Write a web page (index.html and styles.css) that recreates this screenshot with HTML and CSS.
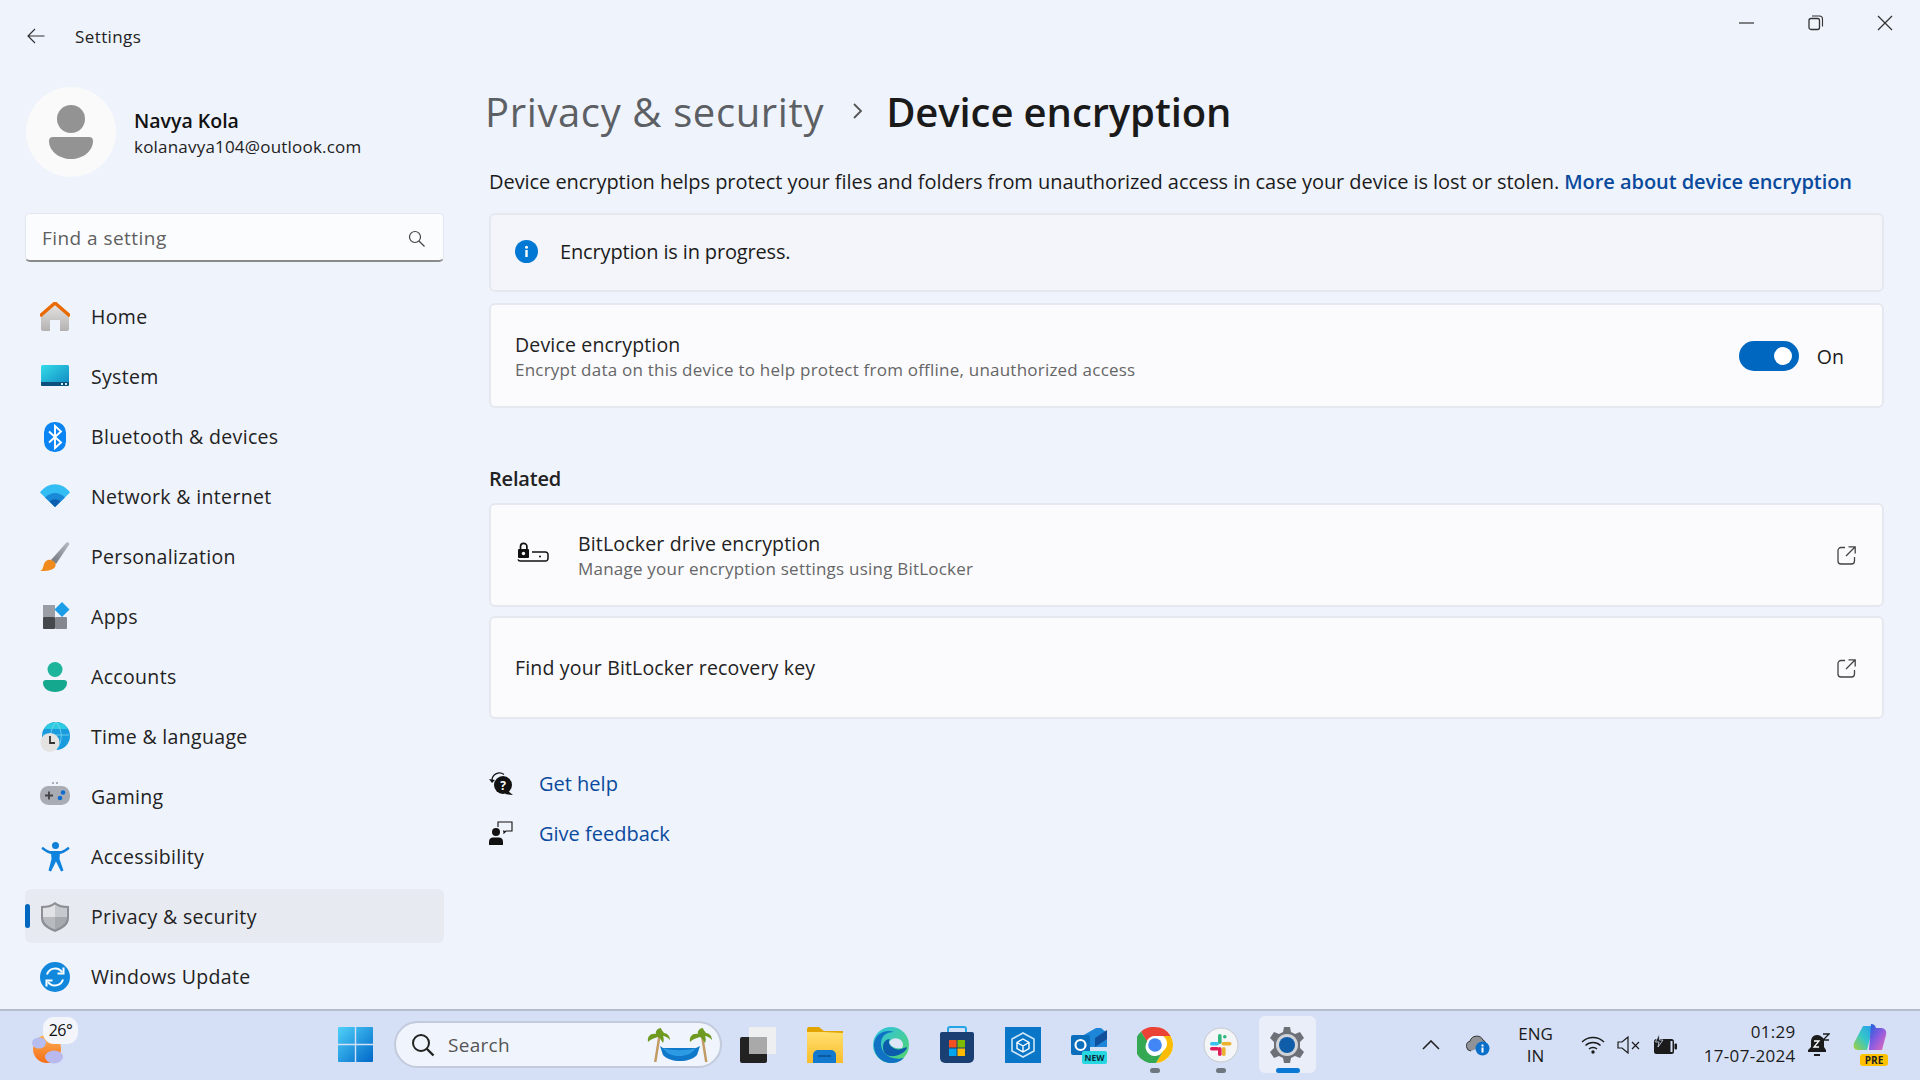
FILE: index.html
```html
<!DOCTYPE html>
<html lang="en">
<head>
    <meta charset="UTF-8">
    <title>Settings</title>
    <link rel="stylesheet" href="styles.css">
</head>
<body>
    <div class="window">
        <div class="titlebar">
            <div class="title-left">
                <svg class="back" width="20" height="20" viewBox="0 0 20 20"><path d="M18.5 10H2M9 3l-7 7 7 7" fill="none" stroke="#333" stroke-width="1.2"/></svg>
                <span>Settings</span>
            </div>
            <div class="controls">
                <svg width="16" height="16" viewBox="0 0 16 16"><path d="M0 8h15" stroke="#333" stroke-width="1.2"/></svg>
                <svg width="16" height="16" viewBox="0 0 16 16"><rect x="1" y="3.5" width="10.5" height="11" rx="2" fill="none" stroke="#333" stroke-width="1.3"/><path d="M4 1h7.5a3 3 0 0 1 3 3v7.5" fill="none" stroke="#333" stroke-width="1.1"/></svg>
                <svg width="16" height="16" viewBox="0 0 16 16"><path d="M1 1l14 14M15 1L1 15" stroke="#333" stroke-width="1.3"/></svg>
            </div>
        </div>
        <div class="content">
            <aside class="sidebar">
                <div class="profile">
                    <div class="avatar">
                        <svg width="44" height="54" viewBox="0 0 44 54"><circle cx="22" cy="14" r="14" fill="#939393"/><path d="M0 36a4 4 0 0 1 4-4h36a4 4 0 0 1 4 4c0 10-10 18-22 18S0 46 0 36z" fill="#939393"/></svg>
                    </div>
                    <div class="profile-text">
                        <div class="profile-name">Navya Kola</div>
                        <div class="profile-mail">kolanavya104@outlook.com</div>
                    </div>
                </div>
                <div class="search">
                    <span>Find a setting</span>
                    <svg width="17" height="17" viewBox="0 0 17 17"><circle cx="7" cy="7" r="5.5" fill="none" stroke="#444" stroke-width="1.2"/><path d="M11 11l5.5 5.5" stroke="#444" stroke-width="1.2"/></svg>
                </div>
                <nav class="nav">
                    <a class="nav-item">
                        <svg class="nav-icon" viewBox="0 0 30 30">
                            <defs><linearGradient id="hw" x1="0" y1="0" x2="0" y2="1"><stop offset="0" stop-color="#e6e4e2"/><stop offset="1" stop-color="#b4b2b0"/></linearGradient></defs>
                            <path d="M1 12L15 2l14 10v15a2 2 0 0 1-2 2h-7V18h-10v11H3a2 2 0 0 1-2-2z" fill="url(#hw)"/>
                            <path d="M0 14L15 1l15 13" fill="none" stroke="#e86a00" stroke-width="3.4"/>
                        </svg>
                        <span>Home</span>
                    </a>
                    <a class="nav-item">
                        <svg class="nav-icon" viewBox="0 0 30 30">
                            <defs><linearGradient id="sy" x1="0" y1="0" x2="1" y2="1"><stop offset="0" stop-color="#34dce8"/><stop offset="1" stop-color="#0f86c0"/></linearGradient></defs>
                            <rect x="1" y="3" width="28" height="21" rx="1.5" fill="url(#sy)"/>
                            <path d="M1 20h28v2.5a1.5 1.5 0 0 1-1.5 1.5h-25A1.5 1.5 0 0 1 1 22.5z" fill="#0b4f7c"/>
                            <path d="M21 21h2v2h-2zM25 21h2v2h-2z" fill="#cfeaf5"/>
                        </svg>
                        <span>System</span>
                    </a>
                    <a class="nav-item">
                        <svg class="nav-icon" viewBox="0 0 30 30">
                            <rect x="4" y="0" width="22" height="30" rx="10.5" fill="#0a84f2"/>
                            <path d="M9 9.5l12 11-6 5.5V4l6 5.5-12 11" fill="none" stroke="#fff" stroke-width="1.9"/>
                        </svg>
                        <span>Bluetooth &amp; devices</span>
                    </a>
                    <a class="nav-item">
                        <svg class="nav-icon" viewBox="0 0 30 30">
                            <path d="M0 10.5C8-.5 22-.5 30 10.5L15 25z" fill="#33bdf2"/>
                            <path d="M5 15.5c6-6 14-6 20 0l-10 9.5z" fill="#1a8ad8"/>
                            <path d="M9.5 19.5c3.5-3 7.500-3 11 0L15 25z" fill="#0c5fae"/>
                        </svg>
                        <span>Network &amp; internet</span>
                    </a>
                    <a class="nav-item">
                        <svg class="nav-icon" viewBox="0 0 30 30">
                            <defs><linearGradient id="br" x1="0" y1="1" x2="1" y2="0"><stop offset="0" stop-color="#6d737a"/><stop offset="1" stop-color="#b9bdc3"/></linearGradient></defs>
                            <path d="M11 18L26.5.5c1.5-.8 3 .3 2.7 2L16 22z" fill="url(#br)"/>
                            <path d="M0 29c3-1 3-4 4-7s4-5 7-4 6 4 4 7-8 4.5-15 4z" fill="#f08a1d"/>
                        </svg>
                        <span>Personalization</span>
                    </a>
                    <a class="nav-item">
                        <svg class="nav-icon" viewBox="0 0 30 30">
                            <rect x="3" y="3" width="12" height="12" fill="#9a9ea4"/>
                            <rect x="3" y="15" width="12" height="12" rx="1" fill="#45484d"/>
                            <rect x="15" y="15" width="12" height="12" rx="1" fill="#84888e"/>
                            <path d="M22 0l7.5 7.5-7.5 7.5-7.5-7.5z" fill="#1b9de8"/>
                        </svg>
                        <span>Apps</span>
                    </a>
                    <a class="nav-item">
                        <svg class="nav-icon" viewBox="0 0 30 30">
                            <circle cx="15" cy="7.5" r="7.5" fill="#1cb59c"/>
                            <path d="M3 21a3 3 0 0 1 3-3h18a3 3 0 0 1 3 3c0 5-5 9-12 9S3 26 3 21z" fill="#14a88f"/>
                        </svg>
                        <span>Accounts</span>
                    </a>
                    <a class="nav-item">
                        <svg class="nav-icon" viewBox="0 0 30 30">
                            <circle cx="16" cy="14" r="14" fill="#1a9bde"/>
                            <path d="M16 0a14 14 0 0 0-12 7h24a14 14 0 0 0-12-7z" fill="#2ecbe0"/>
                            <path d="M3 13h26M16 0c-7 8-7 20 0 28M16 0c7 8 7 20 0 28" fill="none" stroke="#7ed5ee" stroke-width=".8"/>
                            <circle cx="10" cy="20.5" r="9.5" fill="#e4e3e1"/>
                            <path d="M10 14v7h5" fill="none" stroke="#333" stroke-width="1.8"/>
                        </svg>
                        <span>Time &amp; language</span>
                    </a>
                    <a class="nav-item">
                        <svg class="nav-icon" viewBox="0 0 30 30">
                            <rect x="0" y="4" width="30" height="19" rx="8.5" fill="#a9acb2"/>
                            <path d="M5 13.5h8M9 9.5v8" stroke="#444" stroke-width="1.8"/>
                            <circle cx="23" cy="10.5" r="2.3" fill="#0f6cd0"/><circle cx="20" cy="16" r="2.3" fill="#0f6cd0"/>
                            <path d="M12 1h2M16 1h2" stroke="#666" stroke-width="1"/>
                        </svg>
                        <span>Gaming</span>
                    </a>
                    <a class="nav-item">
                        <svg class="nav-icon" viewBox="0 0 30 30">
                            <circle cx="15.5" cy="3.5" r="3.5" fill="#0f7fd8"/>
                            <path d="M3 6.5c4 3 7 4 8 4h9c1 0 4-1 8-4" fill="none" stroke="#0f7fd8" stroke-width="2.8" stroke-linecap="round"/>
                            <path d="M11 10h9l-.5 7 4 11.5-2.5 1-5-10-5 10-2.5-1 3-11.5z" fill="#0f84df"/>
                        </svg>
                        <span>Accessibility</span>
                    </a>
                    <a class="nav-item is-active">
                        <svg class="nav-icon" viewBox="0 0 30 30">
                            <path d="M15 0c4 3 8 4 14 4v12c0 7-6 11-14 14C7 27 1 23 1 16V4c6 0 10-1 14-4z" fill="#8c9095"/>
                            <path d="M15 2.5c3 2.5 7 3.5 12 3.5V15H15z" fill="#c6c9cd"/>
                            <path d="M15 2.5C12 5 8 6 3 6V15H15z" fill="#e0e2e5"/>
                            <path d="M3 15H15v12.5c-6-2.5-12-6-12-12.5z" fill="#b8bbbf"/>
                            <path d="M27 15H15v12.5c6-2.5 12-6 12-12.5z" fill="#a6a9ae"/>
                        </svg>
                        <span>Privacy &amp; security</span>
                    </a>
                    <a class="nav-item">
                        <svg class="nav-icon" viewBox="0 0 30 30">
                            <circle cx="15" cy="15" r="15" fill="#1288dc"/>
                            <path d="M7 12.5a8.5 8.5 0 0 1 15-2.5M23 17.5a8.5 8.5 0 0 1-15 2.5" fill="none" stroke="#fff" stroke-width="2"/>
                            <path d="M23.5 5.5v6h-6M6.5 24.5v-6h6" fill="none" stroke="#fff" stroke-width="2"/>
                        </svg>
                        <span>Windows Update</span>
                    </a>
                </nav>
            </aside>
            <main class="main">
                <div class="crumbs">
                    <span class="crumb-parent">Privacy &amp; security</span>
                    <svg class="crumb-sep" width="12" height="18" viewBox="0 0 12 18"><path d="M2 2l7 7-7 7" fill="none" stroke="#555" stroke-width="1.8"/></svg>
                    <span class="crumb-current">Device encryption</span>
                </div>
                <div class="page">
                    <p class="intro">Device encryption helps protect your files and folders from unauthorized access in case your device is lost or stolen. <a class="intro-link">More about device encryption</a></p>
                    <div class="card card-info">
                        <svg width="23" height="23" viewBox="0 0 23 23"><circle cx="11.5" cy="11.5" r="11.5" fill="#0078d4"/><rect x="10.3" y="10" width="2.4" height="7" fill="#fff"/><circle cx="11.5" cy="7.3" r="1.5" fill="#fff"/></svg>
                        <span>Encryption is in progress.</span>
                    </div>
                    <div class="card card-setting">
                        <div>
                            <div class="card-title">Device encryption</div>
                            <div class="card-sub">Encrypt data on this device to help protect from offline, unauthorized access</div>
                        </div>
                        <div class="toggle-wrap">
                            <div class="toggle"><div class="knob"></div></div>
                            <span>On</span>
                        </div>
                    </div>
                    <h2 class="section">Related</h2>
                    <div class="card card-link">
                        <svg class="bitlocker" width="32" height="22" viewBox="0 0 32 22">
                            <path d="M3.5 9V5.5a3.2 3.2 0 0 1 6.4 0V9" fill="none" stroke="#111" stroke-width="1.7"/>
                            <rect x="1" y="8" width="11" height="9" rx="1" fill="#111"/><circle cx="6.5" cy="12.5" r="1.7" fill="#fff"/>
                            <path d="M15 11h13.5a2.5 2.5 0 0 1 2.500 2.500v4a2.500 2.500 0 0 1-2.500 2.500H3.500A2.500 2.500 0 0 1 1 18.500" fill="none" stroke="#111" stroke-width="1.5"/>
                            <circle cx="23" cy="15.5" r="1" fill="#111"/>
                        </svg>
                        <div class="card-grow">
                            <div class="card-title">BitLocker drive encryption</div>
                            <div class="card-sub">Manage your encryption settings using BitLocker</div>
                        </div>
                        <svg width="19" height="19" viewBox="0 0 19 19"><path d="M8 1.5H4A3 3 0 0 0 1 4.5v10.500a3 3 0 0 0 3 3h10.500a3 3 0 0 0 3-3v-4M11.500 .8h6.700v6.700M18 1L9 10" fill="none" stroke="#444" stroke-width="1.3"/></svg>
                    </div>
                    <div class="card card-link card-find">
                        <div class="card-grow card-title">Find your BitLocker recovery key</div>
                        <svg width="19" height="19" viewBox="0 0 19 19"><path d="M8 1.5H4A3 3 0 0 0 1 4.5v10.500a3 3 0 0 0 3 3h10.500a3 3 0 0 0 3-3v-4M11.500 .8h6.700v6.700M18 1L9 10" fill="none" stroke="#444" stroke-width="1.3"/></svg>
                    </div>
                    <div class="help-links">
                        <a class="help-link">
                            <svg width="24" height="24" viewBox="0 0 24 24">
                                <path d="M3 10a7.5 7.5 0 0 1 12-6.5" fill="none" stroke="#111" stroke-width="1.2"/><path d="M0 8l3 4 3-3" fill="#111"/>
                                <circle cx="14" cy="14" r="9" fill="#111"/><path d="M19 20l5 4-8-1z" fill="#111"/>
                                <text x="14" y="18.5" class="help-q">?</text>
                            </svg>
                            <span>Get help</span>
                        </a>
                        <a class="help-link">
                            <svg width="24" height="24" viewBox="0 0 24 24">
                                <circle cx="7" cy="11" r="4" fill="#111"/><path d="M0 24v-3.5c0-2.5 2-4 4-4h6c2 0 4 1.5 4 4V24z" fill="#111"/>
                                <path d="M9 6V1h14v9h-6l-2 2v-2h-1" fill="none" stroke="#111" stroke-width="1.1"/>
                            </svg>
                            <span>Give feedback</span>
                        </a>
                    </div>
                </div>
            </main>
        </div>
    </div>

    <footer class="taskbar">
        <div class="weather">
            <svg width="34" height="30" viewBox="0 0 34 30">
                <defs><linearGradient id="sun" x1="0" y1="0" x2="0" y2="1"><stop offset="0" stop-color="#fbb25a"/><stop offset="1" stop-color="#f56c15"/></linearGradient></defs>
                <circle cx="15" cy="15" r="14" fill="url(#sun)"/>
                <ellipse cx="7" cy="9" rx="7" ry="5.5" fill="#b6bdf0"/>
                <ellipse cx="22" cy="23" rx="9" ry="6.5" fill="#b9b9f0"/>
            </svg>
            <span class="weather-temp">26°</span>
        </div>
        <svg class="start" width="35" height="35" viewBox="0 0 35 35">
            <defs><linearGradient id="win" x1="0" y1="0" x2="1" y2="1"><stop offset="0" stop-color="#4fd1f9"/><stop offset="1" stop-color="#0067c8"/></linearGradient></defs>
            <path d="M0 1a1 1 0 0 1 1-1h15.8v16.8H0zM18.2 0H34a1 1 0 0 1 1 1v15.8H18.2zM0 18.2h16.8V35H1a1 1 0 0 1-1-1zM18.2 18.2H35V34a1 1 0 0 1-1 1H18.2z" fill="url(#win)"/>
        </svg>
        <div class="tb-search">
            <svg width="24" height="24" viewBox="0 0 24 24"><circle cx="10" cy="10" r="8" fill="none" stroke="#222" stroke-width="2"/><path d="M15.5 15.5l7 7" stroke="#222" stroke-width="2.4"/></svg>
            <span>Search</span>
            <svg class="hammock" width="67" height="36" viewBox="0 0 67 36">
                <path d="M12 10l-4 25h2.5l4-25zM55 10l4 25h2.500l-4-25z" fill="#c29a63"/>
                <path d="M2 15c-1-6 3-9 8-8-1-3 2-6 5-6 0 2 2 3 3 5 3 0 6 3 6 7-3-3-5-4-7-4 1 2 1 5 0 7-2-3-3-5-5-6-3 1-7 2-10 5z" fill="#6f9a22"/>
                <path d="M44 15c-1-6 3-9 8-8-1-3 2-6 5-6 0 2 2 3 3 5 3 0 6 3 6 7-3-3-5-4-7-4 1 2 1 5 0 7-2-3-3-5-5-6-3 1-7 2-10 5z" fill="#6f9a22"/>
                <path d="M14 19l3 2h33l4-2-3 9c-4 4-10 6-17 6s-13-2-17-6z" fill="#0f78c8"/>
                <path d="M17 21c8 3 25 3 33 0-4 6-10 8-17 8s-12-2-16-8z" fill="#2c9be3"/>
            </svg>
        </div>
        <div class="tb-apps">
            <div class="tb-app">
                <svg width="40" height="36" viewBox="0 0 40 36"><rect x="1" y="10" width="27" height="26" rx="2" fill="#222"/><rect x="10" y="0" width="27" height="27" rx="1" fill="#f0f0f0" opacity=".92"/><rect x="10" y="10" width="18" height="17" fill="#a9a9a9"/></svg>
            </div>
            <div class="tb-app">
                <svg width="36" height="36" viewBox="0 0 36 36">
                    <defs><linearGradient id="fol" x1="0" y1="0" x2="0" y2="1"><stop offset="0" stop-color="#ffe070"/><stop offset="1" stop-color="#fcbc2a"/></linearGradient></defs>
                    <path d="M0 2a2 2 0 0 1 2-2h10l5 4h19v8H0z" fill="#e3a400"/>
                    <path d="M0 5h16l20 1v30H0z" fill="url(#fol)"/>
                    <path d="M6 36v-8a5 5 0 0 1 5-5h13a5 5 0 0 1 5 5v8z" fill="#1279cf"/><path d="M11 29h13" stroke="#0a4f8f" stroke-width="1.5"/>
                </svg>
            </div>
            <div class="tb-app">
                <svg width="36" height="36" viewBox="0 0 36 36">
                    <defs><linearGradient id="edg" x1="0" y1="0" x2="1" y2="1"><stop offset="0" stop-color="#2fc2e6"/><stop offset="1" stop-color="#54d56a"/></linearGradient></defs>
                    <circle cx="18" cy="18" r="18" fill="url(#edg)"/>
                    <path d="M1 16C3 6 13 2 21 5c-8 0-13 4-13 12 0 9 9 17 23 14-4 4-8 5-13 5C8 36 0 27 1 16z" fill="#0f72c4"/>
                    <path d="M16 16c1-4 6-6 10-4 4 2 5 6 3 9-4 1-10 0-13-5z" fill="#dce6f7"/>
                    <path d="M10 20c0-5 3-8 7-8-2 2-1 6 2 8 3 3 8 3 12 1 2-1 3-1 3 0-4 9-24 13-24-1z" fill="#0c5cae"/>
                </svg>
            </div>
            <div class="tb-app">
                <svg width="36" height="38" viewBox="0 0 36 38">
                    <path d="M9 8V3a2 2 0 0 1 2-2h14a2 2 0 0 1 2 2v5" fill="none" stroke="#25a5e4" stroke-width="2"/>
                    <path d="M1 8a2 2 0 0 1 2-2h30a2 2 0 0 1 2 2v24a5 5 0 0 1-5 5H6a5 5 0 0 1-5-5z" fill="#1a3f72"/>
                    <rect x="10" y="14" width="7.5" height="7.5" fill="#f25022"/><rect x="18.5" y="14" width="7.5" height="7.5" fill="#7fba00"/><rect x="10" y="22.5" width="7.5" height="7.5" fill="#00a4ef"/><rect x="18.5" y="22.5" width="7.5" height="7.5" fill="#ffb900"/>
                </svg>
            </div>
            <div class="tb-app">
                <svg width="36" height="36" viewBox="0 0 36 36">
                    <rect width="36" height="36" fill="#0a76c8"/>
                    <path d="M18 6l11 6v12l-11 6-11-6V12z" fill="none" stroke="#cfe6f7" stroke-width="1.6"/>
                    <path d="M18 12l6 3.5v6L18 25l-6-3.5v-6zM12 15.5l6 3.5 6-3.5M18 19v6" fill="none" stroke="#fff" stroke-width="1.4"/>
                </svg>
            </div>
            <div class="tb-app">
                <svg width="36" height="38" viewBox="0 0 36 38">
                    <path d="M11 10l14-8h5l6 5v14H11z" fill="#1d86d8"/><path d="M24 12l12-8v9l-12 8z" fill="#0f4f9c"/>
                    <rect x="0" y="9" width="19" height="20" rx="2" fill="#0a6ebd"/><circle cx="9.5" cy="19" r="5" fill="none" stroke="#fff" stroke-width="2.2"/>
                    <rect x="11" y="25" width="25" height="13" rx="2" fill="#26d6e0"/>
                    <text x="23.5" y="35" class="new-badge">NEW</text>
                </svg>
            </div>
            <div class="tb-app has-dot">
                <svg width="36" height="36" viewBox="0 0 36 36">
                    <circle cx="18" cy="18" r="18" fill="#fff"/>
                    <path d="M18 0a18 18 0 0 1 15.6 9H18a9 9 0 0 0-8.3 5.5L4 4.7A18 18 0 0 1 18 0z" fill="#ea4335"/>
                    <path d="M33.6 9A18 18 0 0 1 19 36l7-12a9 9 0 0 0 0-15z" fill="#fbbc05"/>
                    <path d="M4 4.7A18 18 0 0 0 19 36l6.5-11a9 9 0 0 1-15.3-10.5z" fill="#34a853"/>
                    <circle cx="18" cy="18" r="8.5" fill="#fff"/><circle cx="18" cy="18" r="6.8" fill="#4285f4"/>
                </svg>
                <i class="dot"></i>
            </div>
            <div class="tb-app has-dot">
                <svg width="36" height="36" viewBox="0 0 36 36">
                    <circle cx="18" cy="18" r="17" fill="#f4f5f7" stroke="#c5c8cf"/>
                    <rect x="15" y="7" width="3.6" height="10" rx="1.8" fill="#2eb67d"/><rect x="20" y="8" width="3.6" height="3.6" rx="1.8" fill="#2eb67d"/>
                    <rect x="18.5" y="15" width="10" height="3.6" rx="1.8" fill="#ecb22e"/><rect x="19" y="20" width="3.6" height="9" rx="1.8" fill="#ecb22e"/>
                    <rect x="7" y="15" width="9" height="3.6" rx="1.8" fill="#36c5f0"/><rect x="7" y="20" width="9" height="3.6" rx="1.8" fill="#e01e5a"/>
                    <rect x="15" y="20" width="3.6" height="9" rx="1.8" fill="#e01e5a"/>
                </svg>
                <i class="dot"></i>
            </div>
            <div class="tb-app is-open">
                <svg width="36" height="36" viewBox="0 0 36 36">
                    <path d="M15 0h6l1 5 4 2 5-2 4 6-4 4v6l4 4-4 6-5-2-4 2-1 5h-6l-1-5-4-2-5 2-4-6 4-4v-6L1 11l4-6 5 2 4-2z" fill="#6d7177"/>
                    <circle cx="18" cy="18" r="11" fill="#d0d3d8"/><circle cx="18" cy="18" r="8" fill="#0f5ca8"/>
                </svg>
                <i class="bar"></i>
            </div>
        </div>
        <div class="tray">
            <svg class="tray-chevron" width="18" height="10" viewBox="0 0 18 10"><path d="M1 9l8-8 8 8" fill="none" stroke="#222" stroke-width="1.6"/></svg>
            <svg class="tray-cloud" width="24" height="22" viewBox="0 0 24 22">
                <path d="M5 17a5 5 0 0 1-1-9.8A7 7 0 0 1 17 6a5 5 0 0 1 3 5" fill="#8f9296" stroke="#333" stroke-width="1"/>
                <circle cx="16.5" cy="14.5" r="7" fill="#0a6fc9"/><rect x="15.5" y="13.5" width="2" height="5" fill="#fff"/><rect x="15.5" y="10.5" width="2" height="2" fill="#fff"/>
            </svg>
            <div class="tray-lang"><span>ENG</span><span>IN</span></div>
            <svg class="tray-wifi" width="24" height="18" viewBox="0 0 24 18"><path d="M1 6c6-6 16-6 22 0M4.5 9.5c4-4 11-4 15 0M8 13c2-2 6-2 8 0" fill="none" stroke="#1b1b1b" stroke-width="1.3"/><circle cx="12" cy="16" r="1.7" fill="#1b1b1b"/></svg>
            <svg class="tray-vol" width="24" height="18" viewBox="0 0 24 18"><path d="M1 6h4l6-5v16l-6-5H1z" fill="none" stroke="#1b1b1b" stroke-width="1.2"/><path d="M15 6l7 7M22 6l-7 7" stroke="#1b1b1b" stroke-width="1.2"/></svg>
            <svg class="tray-batt" width="24" height="22" viewBox="0 0 24 22"><rect x="1" y="5" width="20" height="15" rx="2.5" fill="#1b1b1b"/><rect x="17.5" y="7" width="2" height="11" fill="#d5e0f6"/><rect x="21.5" y="9.5" width="2.5" height="6" rx="1" fill="#1b1b1b"/><path d="M6 0L2.5 8h3.5l-1 5 5-7H6.5z" fill="#1b1b1b" stroke="#d5e0f6" stroke-width=".8"/></svg>
            <div class="tray-clock"><span>01:29</span><span>17-07-2024</span></div>
            <svg class="tray-bell" width="22" height="24" viewBox="0 0 22 24"><path d="M9 2c-4 0-6 3-6 7v5l-3 3v2h18v-2l-2-3V6c-2-2-4-4-7-4z" fill="#1b1b1b"/><path d="M6 22h6" stroke="#1b1b1b" stroke-width="2"/><path d="M6 8h5l-5 6h5" fill="none" stroke="#fff" stroke-width="1.3"/><path d="M15 1h6l-6 6h6" fill="none" stroke="#1b1b1b" stroke-width="1.3"/></svg>
            <div class="copilot">
                <svg width="34" height="30" viewBox="0 0 34 30">
                    <defs>
                        <linearGradient id="cp1" x1="0" y1="1" x2="1" y2="0"><stop offset="0" stop-color="#a6cf3a"/><stop offset=".5" stop-color="#35c7c7"/><stop offset="1" stop-color="#2a9cf0"/></linearGradient>
                        <linearGradient id="cp2" x1="0" y1="0" x2="1" y2="1"><stop offset="0" stop-color="#1560d8"/><stop offset=".5" stop-color="#8a5ce0"/><stop offset="1" stop-color="#ee6bb8"/></linearGradient>
                    </defs>
                    <path d="M10 2h10l-6 24H5c-4 0-5-3-4-7z" fill="url(#cp1)"/>
                    <path d="M18 0c3 0 4 1 5 4l5 0c4 0 6 3 5 7l-4 15H16z" fill="url(#cp2)"/>
                </svg>
                <span class="copilot-tag">PRE</span>
            </div>
        </div>
    </footer>
</body>
</html>
```

FILE: styles.css
```css
* {
    box-sizing: border-box;
}

html, body {
    margin: 0;
    height: 1080px;
    overflow: hidden;
}

body {
    font-family: "Open Sans", "Liberation Sans", sans-serif;
    color: #1b1b1b;
    background-color: #eff3fc;
}

.window {
    height: 1009px;
}

/* title bar */
.titlebar {
    height: 72px;
    display: flex;
    justify-content: space-between;
}
.title-left {
    display: flex;
    align-items: center;
    padding-left: 26px;
    font-size: 17px;
    letter-spacing: 0.4px;
    color: #222;
}
.back {
    margin-right: 29px;
}
.controls {
    display: flex;
    gap: 53px;
    padding: 15px 27px 0 0;
}

.content {
    display: flex;
}

/* sidebar */
.sidebar {
    width: 485px;
    padding: 15px 0 0 25px;
    flex-shrink: 0;
}
.profile {
    display: flex;
    align-items: center;
    gap: 18px;
    padding-left: 1px;
}
.profile-text {
    padding-top: 2px;
}
.avatar {
    width: 90px;
    height: 90px;
    border-radius: 50%;
    background-color: #fafafa;
    display: flex;
    align-items: center;
    justify-content: center;
}
.profile-name {
    font-size: 19.5px;
    font-weight: 600;
    line-height: 26px;
    color: #111;
}
.profile-mail {
    font-size: 17px;
    line-height: 25px;
    letter-spacing: 0.2px;
    color: #222;
}
.search {
    width: 419px;
    height: 49px;
    margin-top: 36px;
    padding: 2px 18px 0 16px;
    display: flex;
    align-items: center;
    justify-content: space-between;
    background-color: #fbfcfe;
    border: 1px solid #e3e6ee;
    border-bottom: 2px solid #8a8a8a;
    border-radius: 5px;
    font-size: 19px;
    letter-spacing: 0.45px;
    color: #5f5f5f;
}
.nav {
    margin-top: 27px;
    display: flex;
    flex-direction: column;
    gap: 6px;
    width: 419px;
}
.nav-item {
    position: relative;
    height: 54px;
    display: flex;
    align-items: center;
    gap: 21px;
    padding: 1px 0 0 15px;
    border-radius: 6px;
    font-size: 19.5px;
    letter-spacing: 0.33px;
    color: #222;
}
.nav-icon {
    width: 30px;
    height: 30px;
    flex-shrink: 0;
}
.nav-item.is-active {
    background-color: #e8eaf1;
}
.nav-item.is-active::before {
    content: "";
    position: absolute;
    left: 0;
    top: 15px;
    width: 5px;
    height: 24px;
    border-radius: 3px;
    background-color: #0067c0;
}

/* main column */
.main {
    width: 1400px;
}
.crumbs {
    height: 78px;
    display: flex;
    align-items: center;
    font-size: 40px;
    font-weight: 600;
    letter-spacing: -0.1px;
}
.crumb-parent {
    color: #5c5f63;
    font-weight: 500;
    letter-spacing: 0.63px;
}
.crumb-sep {
    margin: 0 22px 0 28px;
}
.crumb-current {
    color: #1a1a1a;
}
.page {
    padding-left: 4px;
}
.intro {
    margin: 18px 0 17px;
    font-size: 20px;
    line-height: 28px;
    letter-spacing: -0.055px;
    white-space: nowrap;
}
.intro-link {
    font-weight: 600;
    color: #0a4a9c;
}
.card {
    display: flex;
    align-items: center;
    width: 1395px;
    border: 2px solid #e6e8ef;
    border-radius: 6px;
    background-color: #fbfbfe;
}
.card-info {
    height: 79px;
    padding: 0 0 2px 24px;
    gap: 22px;
    background-color: #f3f5fa;
    font-size: 20px;
    letter-spacing: -0.15px;
    margin-bottom: 11px;
}
.card-setting {
    height: 105px;
    padding: 1px 38px 0 24px;
    justify-content: space-between;
}
.card-title {
    font-size: 19.5px;
    line-height: 26px;
    letter-spacing: 0.17px;
    color: #222;
}
.card-sub {
    font-size: 17px;
    line-height: 23px;
    letter-spacing: 0.22px;
    color: #666;
}
.toggle-wrap {
    display: flex;
    align-items: center;
    gap: 18px;
    font-size: 19.5px;
}
.toggle {
    width: 60px;
    height: 30px;
    border-radius: 15px;
    background-color: #0067c0;
    position: relative;
}
.knob {
    position: absolute;
    right: 7px;
    top: 6px;
    width: 18px;
    height: 18px;
    border-radius: 50%;
    background-color: #fff;
}
.section {
    margin: 57px 0 10px;
    font-size: 20px;
    font-weight: 600;
    line-height: 28px;
    letter-spacing: -0.2px;
    color: #222;
}
.card-link {
    height: 104px;
    padding: 1px 26px 0 26px;
    margin-bottom: 9px;
}
.card-find {
    height: 103px;
    padding: 1px 26px 0 24px;
    margin-bottom: 0;
}
.bitlocker {
    margin: 0 29px 8px 0;
}
.card-grow {
    flex: 1;
}
.help-links {
    margin-top: 49px;
    display: flex;
    flex-direction: column;
    gap: 20px;
}
.help-link {
    height: 30px;
    display: flex;
    align-items: center;
    gap: 26px;
    font-size: 20px;
    color: #0a4a9c;
}
.help-q {
    font-size: 12px;
    font-weight: 700;
    fill: #fff;
    text-anchor: middle;
}

/* taskbar */
.taskbar {
    height: 71px;
    display: flex;
    align-items: center;
    padding-bottom: 2px;
    background-color: #d5e0f6;
    border-top: 2px solid #b5bccb;
    position: relative;
}
.weather {
    position: relative;
    width: 338px;
    padding: 13px 0 0 32px;
}
.weather-temp {
    position: absolute;
    left: 43px;
    top: -4px;
    width: 35px;
    height: 27px;
    border-radius: 11px;
    background-color: #f3f5fb;
    font-size: 16px;
    line-height: 27px;
    text-align: center;
    letter-spacing: -0.6px;
    color: #111;
}
.start {
    margin-right: 21px;
    flex-shrink: 0;
}
.tb-search {
    width: 328px;
    height: 47px;
    display: flex;
    align-items: center;
    gap: 13px;
    padding: 0 7px 0 15px;
    background-color: #f0f4fc;
    border: 2px solid #c2cadb;
    border-radius: 24px;
    font-size: 19px;
    letter-spacing: 0.3px;
    color: #555;
    flex-shrink: 0;
    position: relative;
}
.hammock {
    margin-left: auto;
}
.tb-apps {
    display: flex;
    margin-left: 3.5px;
    flex-shrink: 0;
}
.tb-app {
    position: relative;
    width: 66px;
    height: 57px;
    display: flex;
    align-items: center;
    justify-content: center;
    border-radius: 6px;
}
.tb-app.is-open {
    background-color: #e9eef9;
    width: 57px;
    margin-left: 5px;
}
.dot {
    position: absolute;
    left: 28px;
    bottom: 0;
    width: 10px;
    height: 5px;
    border-radius: 3px;
    background-color: #6f7680;
}
.bar {
    position: absolute;
    left: 17px;
    bottom: 0;
    width: 24px;
    height: 5px;
    border-radius: 3px;
    background-color: #0a78d4;
}
.new-badge {
    font-size: 8.5px;
    font-weight: 700;
    fill: #0b2a3a;
    text-anchor: middle;
}
.tray {
    flex: 1;
    display: flex;
    align-items: center;
    color: #1b1b1b;
}
.tray-chevron {
    margin-left: 106.5px;
}
.tray-cloud {
    margin-left: 26px;
}
.tray-lang {
    width: 60px;
    margin-left: 15.5px;
    display: flex;
    flex-direction: column;
    align-items: center;
    font-size: 17px;
    line-height: 22px;
}
.tray-wifi {
    margin-left: 15px;
}
.tray-vol {
    margin-left: 12px;
}
.tray-batt {
    margin-left: 12px;
}
.tray-clock {
    width: 112px;
    margin: 0 0 1px 7px;
    display: flex;
    flex-direction: column;
    align-items: flex-end;
    font-size: 17px;
    letter-spacing: 0.3px;
    line-height: 24px;
}
.tray-bell {
    margin-left: 12px;
}
.copilot {
    position: relative;
    margin-left: 23.5px;
    width: 34px;
    height: 42px;
}
.copilot-tag {
    position: absolute;
    left: 7px;
    bottom: 0;
    width: 28px;
    height: 12px;
    border-radius: 3px;
    background-color: #fdc100;
    font-size: 10px;
    font-weight: 700;
    line-height: 12px;
    text-align: center;
    color: #222;
}
```
